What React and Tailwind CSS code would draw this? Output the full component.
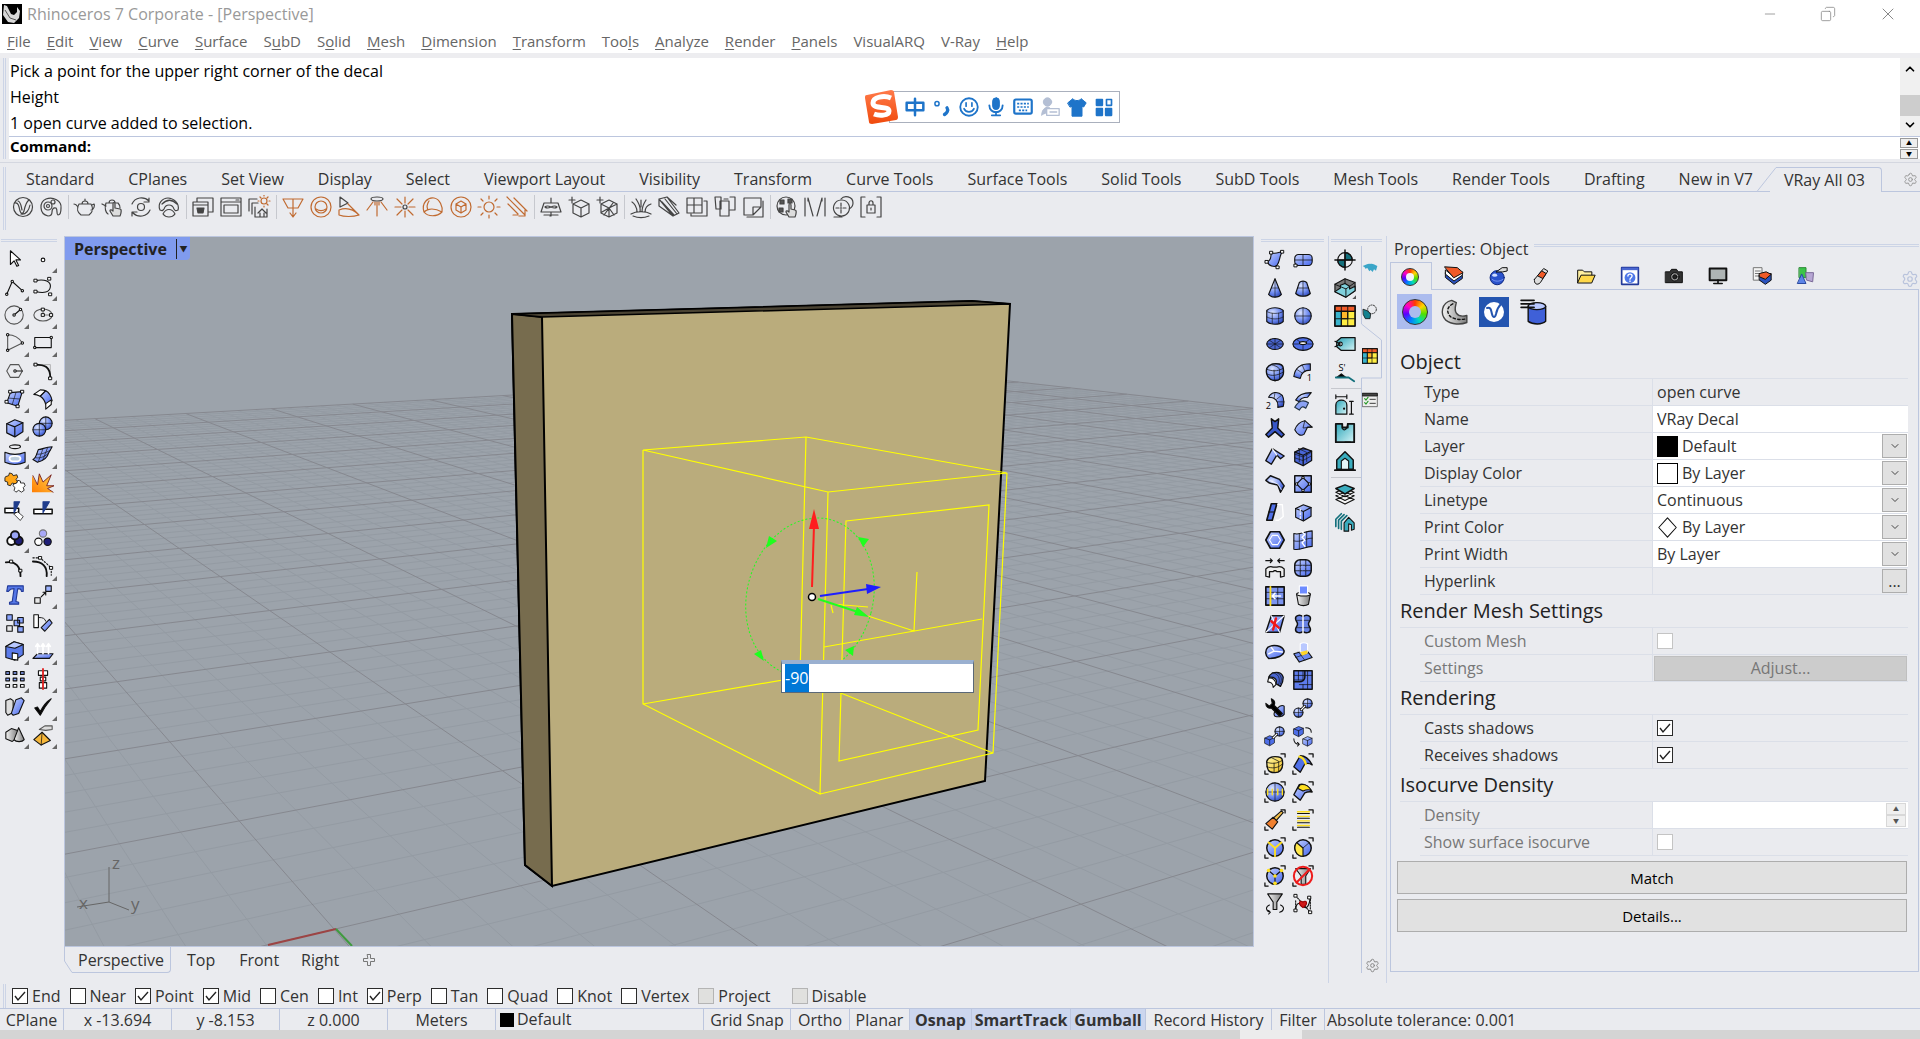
import React from 'react';
import { Settings, Minus, X, Copy, ChevronUp, ChevronDown } from 'lucide-react';

const MENUS = [
  ['File', 0], ['Edit', 0], ['View', 0], ['Curve', 0], ['Surface', 0], ['SubD', 1], ['Solid', 1],
  ['Mesh', 0], ['Dimension', 0], ['Transform', 0], ['Tools', 3], ['Analyze', 0], ['Render', 0],
  ['Panels', 0], ['VisualARQ', -1], ['V-Ray', -1], ['Help', 0],
];

const TABS = [
  'Standard', 'CPlanes', 'Set View', 'Display', 'Select', 'Viewport Layout', 'Visibility',
  'Transform', 'Curve Tools', 'Surface Tools', 'Solid Tools', 'SubD Tools', 'Mesh Tools',
  'Render Tools', 'Drafting', 'New in V7',
];

const Svg = ({ children, size = 'size-6', stroke = '#111' }) => (
  <svg viewBox="0 0 24 24" className={`${size} shrink-0`} fill="none" stroke={stroke} strokeWidth="1.2" strokeLinejoin="round" strokeLinecap="round" aria-hidden="true">
    {children}
  </svg>
);

const Pt = ({ x, y }) => <rect x={x - 1.5} y={y - 1.5} width="3" height="3" fill="#fff" stroke="#000" strokeWidth="1" />;

// shared gradients, referenced by every icon
const Gradients = () => (
  <svg width="0" height="0" className="absolute" aria-hidden="true">
    <defs>
      <linearGradient id="blue" x1="0" y1="0" x2="1" y2="1">
        <stop offset="0" stopColor="#c6d3ff" />
        <stop offset="1" stopColor="#4466ee" />
      </linearGradient>
      <radialGradient id="ball" cx="0.35" cy="0.3" r="0.8">
        <stop offset="0" stopColor="#dbe4ff" />
        <stop offset="0.6" stopColor="#6d8af0" />
        <stop offset="1" stopColor="#2a44b4" />
      </radialGradient>
      <linearGradient id="teal" x1="0" y1="0" x2="1" y2="1">
        <stop offset="0" stopColor="#2ba5b8" />
        <stop offset="1" stopColor="#d6f4f7" />
      </linearGradient>
      <linearGradient id="gray" x1="0" y1="0" x2="1" y2="0">
        <stop offset="0" stopColor="#f4f4f4" />
        <stop offset="1" stopColor="#7d7d7d" />
      </linearGradient>
      <linearGradient id="gold" x1="0" y1="0" x2="1" y2="1">
        <stop offset="0" stopColor="#fff6a8" />
        <stop offset="1" stopColor="#f0c020" />
      </linearGradient>
      <linearGradient id="fire" x1="0" y1="1" x2="1" y2="0">
        <stop offset="0" stopColor="#ff7a00" />
        <stop offset="1" stopColor="#ffd24a" />
      </linearGradient>
      <linearGradient id="sogou" x1="0" y1="0" x2="0" y2="1">
        <stop offset="0" stopColor="#ff7a4a" />
        <stop offset="1" stopColor="#f04a0c" />
      </linearGradient>
    </defs>
  </svg>
);

const ORANGE = '#c06a30';
const GRAY = '#444';

const VRAY_GROUPS = [
  [
    [GRAY, <><circle cx="12" cy="12" r="9.5" /><path d="M4 8c3-1 4 3 5 8 1 3 3 3 4 0 1-5 2-9 5-11M7 6c3 1 3 5 4 9M10 19c5 1 8-4 9-9" /></>],
    [GRAY, <><path d="M9 21C0 19 0 7 7 4c7-3 16 2 15 9 0 5-1 7-3 7-2-1 0-5-2-7-3-1-4 2-4 4s-1 4-4 4z" /><circle cx="9" cy="11" r="4" /><circle cx="14" cy="7" r="2" /><circle cx="9" cy="11" r="1.5" /></>],
  ],
  [
    [GRAY, <><path d="M6 9h12c3 5 1 9-2 11H8C5 18 3 14 6 9zM9 9c0-4 6-4 6 0M12 6V4M5 12C3 9 2 9 1 9M18 15c3 0 4-5 3-6l-2 1" /></>],
    [GRAY, <><path d="M5 8h12c2 2 2 3 2 5M8 8c0-4 6-4 6 0M7 19C5 18 3 13 5 8M5 11L1 9" /><path d="M12 21l-3-5c0-2 2-1 3 0V9c0-2 2-2 2 0v4l5 1c2 0 1 5 0 7z" fill="#ddd" /></>],
    [GRAY, <><circle cx="12" cy="12" r="3.5" /><path d="M3 9c3-7 12-8 17-3M20 3v4h-5M21 15c-3 7-12 8-17 3M3 21v-4h5" /></>],
    [GRAY, <><path d="M3 15c-3-7 3-12 8-12s12 5 10 12c-2 1-3 1-4-1-1-3-3-4-5-4s-4 1-5 4c-1 2-2 2-4 1z" /><path d="M5 9c5-5 10-5 15 0M6 19c3-6 9-6 12 0-3 4-9 4-12 0z" /></>],
  ],
  [
    [GRAY, <><path d="M2 7h15v14H2zM6 7V3h16v14h-5M2 10h15" /><path d="M6 13h7l-1 5H7z" fill="#444" /></>],
    [GRAY, <><path d="M2 3h20v18H2zM2 7h20M5 10h14v8H5zM17 5h3" /></>],
    [GRAY, <><path d="M2 4h8M2 4v12M5 8h6M5 8v11M8 12v10h12v-8M11 18l4-4 4 4M13 18v4M17 18v4" /><g stroke={ORANGE}><circle cx="17" cy="6" r="3" /><path d="M17 0v1M17 11v1M11 6h1M22 6h1M13 2l1 1M21 2l-1 1M21 10l-1-1" /></g></>],
  ],
  [
    [ORANGE, <path d="M2 4h20l-5 9H7zM12 4v17M9 18l3 4 3-4" />],
    [ORANGE, <><circle cx="12" cy="12" r="10" /><circle cx="12" cy="12" r="6" /><path d="M7 14c3 2 7 2 10 0" /></>],
    [ORANGE, <><path d="M3 2l8 6-8 4z" stroke="#444" /><path d="M2 15v5c5 2 14 2 20 0L11 9M2 15c8-3 15 0 20 5" /></>],
    [ORANGE, <><ellipse cx="12" cy="4" rx="6" ry="2" stroke="#444" /><path d="M12 7v14M8 7l-6 8M16 7l6 8M10 7v3M14 7v3" /></>],
    [ORANGE, <><circle cx="12" cy="12" r="2" stroke="#444" /><path d="M12 2v6M12 16v6M2 12h6M16 12h6M4 4l5 5M20 4l-5 5M4 20l5-5M20 20l-5-5" /></>],
    [ORANGE, <path d="M3 17C0 8 7 2 13 3c6 1 9 9 8 14-5 5-14 5-18 0zM3 17c4-4 11-4 18 0M8 6C6 9 6 13 7 15" />],
    [ORANGE, <><circle cx="12" cy="12" r="10" /><path d="M12 6l5 3v6l-5 3-5-3V9zM7 9l5 3 5-3M12 12v6" /></>],
    [ORANGE, <><circle cx="12" cy="12" r="5" /><path d="M12 1v3M12 20v3M1 12h3M20 12h3M4 4l2 2M20 4l-2 2M4 20l2-2M20 20l-2-2" /></>],
    [ORANGE, <path d="M2 2l18 18M14 21h6v-6M3 9l10 10M9 3l13 13M8 20h5" />],
  ],
  [
    [GRAY, <path d="M5 8h14l3 9H2zM12 3v5M12 17v4M12 21h-1M6 12c2-2 4-1 6 0s4 2 6 0c-2-2-4-1-6 0s-4 2-6 0M5 20h14" />],
    [GRAY, <path d="M5 2v6M2 5h6M14 5l8 4v9l-8 4-8-4V9zM6 9l8 4 8-4M14 13v9" />],
    [GRAY, <path d="M5 2v6M2 5h6M14 5l8 4v9l-8 4-8-4V9zM6 9l8 4 8-4M14 13v9M7 17l7-4 5 7M9 20l9-12" />],
  ],
  [
    [GRAY, <path d="M2 19c5-3 15-3 20 0M4 21c5 2 11 2 16 0M8 17C8 12 5 8 3 7M11 17c1-6-2-10-4-13M13 17c0-6 2-9 4-12M16 17c0-4 3-7 6-8M12 12V5" />],
    [GRAY, <path d="M2 4l8-2 12 16-6 3zM2 4v7l14 10M5 7l12 13M8 4l12 15M10 2l9 8" />],
    [GRAY, <path d="M2 3h15v15H2zM2 10h15M9 3v15M19 6h3v15H6v-2" />],
    [GRAY, <path d="M7 6h9v15H7zM2 2h6v12H3zM17 2h5v13h-5M11 4h4" />],
    [GRAY, <path d="M3 3h17v9l-8 8H3zM12 20v-8h8M6 22h16V6" />],
  ],
  [
    [GRAY, <><circle cx="11" cy="11" r="9" /><path d="M5 5h4v4H5zM13 4h4v4h-4zM4 13h4v4H4z" fill="#555" /><path d="M14 22l-3-5c0-2 2-1 3 0v-7c0-2 2-2 2 0v4l4 1c2 0 1 5 0 7z" fill="#ddd" /></>],
    [GRAY, <path d="M2 3v18M22 3v18M5 3l5 18M19 3l-5 18M5 3v3M19 3v3" />],
    [GRAY, <path d="M10 5a8 8 0 1 0 1 0M10 8v3M10 15v3M5 13h3M12 13h3M10 4c3-4 12-3 12 4 0 3-2 5-4 6M3 22h8M10 12v2" />],
    [GRAY, <path d="M6 2H2v20h4M18 2h4v20h-4M8 10h8v8H8zM10 10V8c0-3 4-3 4 0v2M12 13v2" />],
  ],
];

const cube = (x, y, s, fill = 'url(#blue)') => (
  <g transform={`translate(${x} ${y}) scale(${s})`}>
    <path d="M0 5l8-4 8 3v9l-8 5-8-4z" fill={fill} />
    <path d="M0 5l8 3v9M8 8l8-4" />
  </g>
);

const ball = (cx, cy, r) => (
  <g>
    <circle cx={cx} cy={cy} r={r} fill="url(#ball)" />
    <path d={`M${cx - r} ${cy}h${2 * r}M${cx} ${cy - r}v${2 * r}`} strokeWidth="0.7" />
  </g>
);

// [icon, has flyout]
const LEFT_TOOLS = [
  [<path d="M7 3v15l4-4 3 6 2-1-3-6h5z" fill="#fff" />, 0],
  [<circle cx="12" cy="13" r="2" fill="#fff" />, 1],
  [<><path d="M3 20L9 6l11 10" /><circle cx="3" cy="20" r="1.3" fill="#fff" /><circle cx="9" cy="6" r="1.3" fill="#fff" /><circle cx="20" cy="16" r="1.3" fill="#fff" /></>, 1],
  [<><path d="M4 5c10-2 17 1 16 7s-7 7-16 5" /><Pt x={4} y={5} /><Pt x={19} y={3} /><Pt x={4} y={17} /><Pt x={20} y={20} /></>, 1],
  [<><circle cx="11" cy="12" r="10" stroke="#555" /><path d="M11 12l7-6" /><circle cx="11" cy="12" r="1.3" fill="#fff" /><circle cx="18" cy="6" r="1.3" fill="#fff" /></>, 1],
  [<><ellipse cx="12" cy="12" rx="10" ry="6.5" stroke="#555" /><path d="M12 5v7h9" stroke="#777" /><Pt x={12} y={6} /><Pt x={12} y={12} /><Pt x={21} y={12} /></>, 1],
  [<><path d="M4 3c8 0 13 4 16 9L4 20z" stroke="#555" /><circle cx="4" cy="3" r="1.3" fill="#fff" /><circle cx="20" cy="12" r="1.3" fill="#fff" /><circle cx="4" cy="20" r="1.3" fill="#fff" /></>, 1],
  [<><path d="M3 6h18v11H3z" /><circle cx="3" cy="17" r="1.3" fill="#fff" /><circle cx="21" cy="6" r="1.3" fill="#fff" /></>, 1],
  [<><path d="M7 5h9l4 7-4 7H7l-4-7z" stroke="#555" /><path d="M12 12h8" /><circle cx="12" cy="12" r="1.3" fill="#fff" /></>, 1],
  [<><path d="M3 5h17v15" stroke="#999" strokeWidth="0.8" /><path d="M3 5c11 0 17 2 17 15" strokeWidth="2" /><Pt x={4} y={5} /><Pt x={20} y={20} /></>, 1],
  [<><path d="M7 5l13-1-5 16L3 16z" fill="url(#blue)" /><path d="M5 11l12 1M13 5l-4 13" strokeWidth="0.7" /><Pt x={7} y={4} /><Pt x={20} y={4} /><Pt x={3} y={15} /><Pt x={15} y={20} /></>, 1],
  [<><path d="M2 7l7-5c2 0 4 0 6 1l-6 6c-2-1-4-2-7-2z" fill="#fff" /><path d="M9 9l6-6c4 2 6 6 7 11l-7 4c-1-4-3-7-6-9z" fill="url(#blue)" /><path d="M15 17l6-4 0 5-6 5z" fill="#fff" /></>, 1],
  [cube(3, 3, 1.1), 1],
  [<>{ball(15, 8, 7)}{ball(8, 15, 7)}</>, 1],
  [<><ellipse cx="12" cy="3" rx="6" ry="2" /><path d="M1 9c7 3 15 3 22 0v11c-7 3-15 3-22 0z" fill="url(#blue)" /><ellipse cx="12" cy="16" rx="6" ry="3" fill="#bcd" stroke="#fff" strokeWidth="2" /></>, 1],
  [<><path d="M7 6c5 0 7-3 15-3l-4 7c-1 5-5 8-12 10l-5-3c4-2 4-7 6-11z" fill="url(#blue)" /><path d="M5 11c5 1 10-2 15-4M4 15c6 1 11-2 14-5M12 5L7 19M17 4l-5 13" strokeWidth="0.7" /></>, 1],
  [<><path d="M2 5l3-1 1-3 3 1 1 2 4-1 1 3-2 2 2 3-3 2-3-1-2 3-3-1 0-3-3-1 0-3z" fill="#ffa618" strokeWidth="0.900" /><path d="M11 13l3-1 1-3 3 1 0 2 4 0 1 3-2 2 1 3-3 2-3-2-3 2-2-2 1-3-2-2z" fill="#fff" strokeWidth="0.900" /></>, 0],
  [<><path d="M0 24V4l6 10 2-12 4 9 9-8-5 12 8 0-7 3 6 4H0z" fill="url(#fire)" stroke="none" /><path d="M1 4l5 10 2-12 4 9 9-8-5 12 8 0-7 3 6 4" stroke="#722" strokeWidth="1" /></>, 0],
  [<><path d="M1 9h15v5H1z" fill="#fff" strokeWidth="1.6" /><path d="M11 2h6l-6 12z" fill="#1f3c8c" stroke="#1f3c8c" /><path d="M11 15l4-2 6 5-3 4z" fill="#fff" strokeWidth="0.8" /></>, 0],
  [<><path d="M2 10h20v5H2z" fill="#fff" strokeWidth="1.6" /><path d="M12 2h7l-7 12z" fill="#1f3c8c" stroke="#1f3c8c" /></>, 0],
  [<g strokeWidth="2"><circle cx="8" cy="14" r="4.500" fill="#fff" /><circle cx="16" cy="14" r="4.500" fill="#201f78" /><circle cx="12" cy="8" r="4.500" fill="#9aa5f5" /></g>, 1],
  [<><circle cx="12" cy="6" r="4" fill="#a8a8f8" stroke="#777" /><circle cx="7" cy="15" r="4" fill="#fff" /><circle cx="17" cy="15" r="4" fill="#201f78" /></>, 0],
  [<><path d="M2 7c11-2 16 5 16 15" strokeWidth="2" /><Pt x={8} y={6} /><Pt x={18} y={16} /></>, 0],
  [<><path d="M1 6c10 0 16 5 15 16" strokeWidth="2" /><path d="M1 2h8l12 11v8" strokeDasharray="1.5 2" /><Pt x={9} y={2} /><Pt x={21} y={13} /></>, 1],
  [<path d="M4 2h17v6h-2c0-2-1-3-4-3l-2 14 3 1v2H6v-2l3-1 2-14C7 5 6 6 5 8H3z" fill="#5577e6" stroke="#223a99" />, 0],
  [<><path d="M15 2h6v6h-6z" fill="#9db4ff" /><path d="M3 15h6v6H3z" fill="#e8e8e8" /><path d="M10 14l5-5M12 9h3v3" /></>, 1],
  [<g fill="#8aa5ff"><path d="M3 3h6v6H3zM15 6h6v6h-6zM11 9h6v6h-6zM15 16h6v6h-6z" /><path d="M3 15h6v6H3z" fill="#e8e8e8" /></g>, 0],
  [<><path d="M2 3h5v14H2z" fill="#fff" /><path d="M10 17L19 8l3 4-8 9z" fill="url(#blue)" /><path d="M8 6c4 0 6 1 7 4" strokeWidth="1" /></>, 0],
  [<><path d="M2 7l9-5 10 3v11l-9 6-10-3z" fill="#5b7bea" /><path d="M2 7l10 2 9-4-10-3z" fill="#b8c8ff" /><path d="M9 14l6 1v7l-6-1z" fill="#fff" /></>, 1],
  [<><path d="M1 20l5-5h17l-4 5z" fill="url(#blue)" /><path d="M6 15V5M4 7l2-3 2 3M12 15V5M10 7l2-3 2 3M18 15V5M16 7l2-3 2 3" stroke="#fff" strokeWidth="1.8" /></>, 1],
  [<g fill="#8aa5ff"><path d="M2 4h4v3H2zM10 4h4v3h-4zM18 4h4v3h-4zM2 11h4v3H2zM10 11h4v3h-4zM18 11h4v3h-4z" /><path d="M2 18h4v3H2zM10 18h4v3h-4zM18 18h4v3h-4z" fill="#fff" /></g>, 1],
  [<><path d="M7 3h10v5H7zM9 10h6v4H9zM8 16h8v6H8z" fill="#fff" /><path d="M12 1v22" stroke="#e02020" strokeWidth="2" /></>, 1],
  [<><path d="M2 5l5-2 3 2v13l-6 3-2-3z" fill="#ddd" /><path d="M13 4l6-2 3 3-6 14-6 2-2-2z" fill="url(#blue)" /></>, 1],
  [<path d="M3 13l3-1 3 5C12 11 16 6 21 3 16 9 12 15 9 21z" fill="#000" />, 1],
  [<><path d="M2 9l6-4 7 2v8l-6 4-7-3z" fill="url(#gray)" /><path d="M16 4l6 13c-2 3-9 3-11 0z" fill="url(#gray)" /></>, 1],
  [<><path d="M11 9l9 9-10 5-8-6z" fill="#f5b63a" /><path d="M11 9l-1 14" strokeWidth="0.8" /><path d="M8 6l6-4 8 0v4l-7 1z" fill="#ddd" stroke="#555" /></>, 1],
];

const brackets = <path d="M18 1h5v4M1 19v4h4" strokeWidth="1.4" strokeLinecap="butt" />;

const SUBD_TOOLS = [
  <><path d="M8 4c6 2 8-1 12-1-4 6-2 10-6 15-2 2-9 1-10-4 5-3 3-7 4-10z" fill="url(#blue)" /><Pt x={8} y={4} /><Pt x={20} y={3} /><Pt x={3} y={14} /><Pt x={15} y={20} /></>,
  <><rect x="3" y="6" width="19" height="12" rx="4" fill="url(#blue)" /><path d="M3 12h19M12 6v12" strokeWidth="0.8" /><Pt x={4} y={18} /></>,
  <><path d="M12 2l7 17c-3 4-11 4-14 0z" fill="url(#ball)" /><path d="M12 2v20M8 12h8" strokeWidth="0.6" /></>,
  <><path d="M8 6c2-2 6-2 8 0l4 12c-4 4-12 4-16 0z" fill="url(#ball)" /><path d="M12 5v16M6 12h12" strokeWidth="0.7" /></>,
  <><path d="M3 6c4-4 14-4 18 0v12c-4 4-14 4-18 0z" fill="url(#ball)" /><path d="M3 7c4 3 14 3 18 0M3 13c5 3 13 3 18 0M9 9v11M16 9v11" strokeWidth="0.7" /></>,
  ball(12, 12, 9),
  <><ellipse cx="12" cy="12" rx="9" ry="6" fill="#4a66d0" /><path d="M3 12h18M6 8l12 8M18 8L6 16M12 6v12" strokeWidth="0.7" /></>,
  <><ellipse cx="12" cy="12" rx="11" ry="7" fill="#4f6fe8" /><ellipse cx="12" cy="11" rx="4" ry="1.6" fill="#fff" /><path d="M1 12h6M17 12h6M12 13v6M5 7l4 3M19 7l-4 3" strokeWidth="0.7" /></>,
  <><path d="M3 8c2-4 6-5 10-5 5 0 8 2 8 5 1 6 0 9-3 11-3 3-9 3-12 0-3-2-4-7-3-11z" fill="url(#ball)" strokeWidth="1.500" /><path d="M3 9c5 2 11 3 18-1M11 10c0 4 0 8 1 12M8 4c3 1 8 2 9 5v11M3 14c5 3 12 2 18-2" strokeWidth="0.8" /></>,
  <><path d="M2 17C3 8 9 3 20 3v7c-6 0-10 3-11 9z" fill="url(#ball)" /><path d="M5 9l6 4M11 4l3 7" strokeWidth="0.7" /><text x="16" y="22" fontSize="10" fill="#000" stroke="none">1</text></>,
  <><path d="M5 9c3-6 10-7 15-2 2 4 2 8 1 12l-6 1c1-7-3-11-10-11z" fill="url(#ball)" /><path d="M12 4l-1 6M19 7l-5 4M22 14l-7 0" strokeWidth="0.7" /><text x="2" y="22" fontSize="10" fill="#000" stroke="none">2</text></>,
  <><path d="M4 12c3-6 8-8 17-8l-4 5c-5 0-8 1-9 5z" fill="url(#ball)" /><path d="M3 20c4-7 9-9 15-5l-3 6c-4-3-5-1-7 2z" fill="#8ba2f4" stroke="#234" /></>,
  <path d="M8 2l4 3 4-3-1 10 7 7-3 3-7-6-7 6-3-3 7-7z" fill="#3857c8" strokeWidth="1.6" />,
  <><path d="M3 14c2-6 6-9 11-10l8 7-5 0-4 8c-3 2-7 1-10-5z" fill="url(#blue)" /><path d="M14 4l-2 8 10-1" strokeWidth="0.8" /></>,
  <><path d="M2 17L9 4l13 8-4 3-4-4-6 10z" fill="url(#blue)" strokeWidth="1.500" /><path d="M9 4l5 7" stroke="#fff" /></>,
  <>{cube(3, 2, 1.15, '#4966d8')}<path d="M7 4l9 4v10M3 14l9 3 9-5M3 10l9 3 9-5M8 6v12M16 5l-9-1" strokeWidth="0.7" /></>,
  <><path d="M2 8l5-5 10 4 5 7-4 7-3-8-9-2z" fill="url(#ball)" strokeWidth="1.6" /><path d="M6 8l9 4 4 6" stroke="#fff" strokeWidth="0.8" /></>,
  <><path d="M3 3h18v18H3z" fill="url(#blue)" strokeWidth="1.6" /><path d="M12 5l7 7-7 7-7-7z" /><circle cx="12" cy="5" r="1.3" fill="#fff" /><circle cx="19" cy="12" r="1.3" fill="#fff" /><circle cx="12" cy="19" r="1.3" fill="#fff" /><circle cx="5" cy="12" r="1.3" fill="#fff" /></>,
  <><path d="M8 3h6L9 21H3z" fill="#4f6fe8" strokeWidth="1.8" /><path d="M5 12h6" /><path d="M15 4h5l1 13-5 4h-3" stroke="#fff" strokeWidth="1.5" /></>,
  <>{cube(4, 3, 1.05)}<path d="M9 9v10" stroke="#fff" strokeDasharray="2 2" /></>,
  <><path d="M7 3h10l5 9-5 9H7l-5-9z" fill="url(#blue)" strokeWidth="1.8" /><path d="M9 7h6l3 5-3 5H9l-3-5z" stroke="#fff" /></>,
  <><path d="M2 5c8 2 12-3 20-3v17c-8 0-12 5-20 3z" fill="url(#blue)" /><path d="M2 13c8 2 12-3 20-3M8 5v17M16 3v16" strokeWidth="0.8" /><path d="M11 3l3 3-3 3 3 3-3 3 3 4" stroke="#fff" strokeWidth="1.5" /></>,
  <><path d="M2 4h7M7 2l2 2-2 2M22 4h-7M17 2l-2 2 2 2" strokeWidth="1.4" /><path d="M2 13c3-3 5-3 8-2h4c3-1 5-1 8 2v8l-4 1v-6h-4l-1-1h-2l-1 1H6v6l-4-1z" fill="#eee" strokeWidth="1.4" /></>,
  <><rect x="3" y="3" width="18" height="18" rx="6" fill="url(#blue)" strokeWidth="1.6" /><path d="M3 9h18M3 15h18M9 3v18M15 3v18" strokeDasharray="2 1" strokeWidth="0.9" /></>,
  <><path d="M2 2h20v20H2z" fill="#7b94f0" strokeWidth="1.8" /><path d="M2 8h20M2 15h20M15 2v20" strokeWidth="0.8" /><path d="M7 2v20" stroke="#ffe020" strokeWidth="2" /><path d="M18 12H9M12 9l-3 3 3 3" stroke="#fff" strokeWidth="1.8" /></>,
  <><path d="M5 10h15l-2 11c-3 2-8 2-11 0z" fill="url(#gray)" /><ellipse cx="12.500" cy="10" rx="7.500" ry="2" fill="#eee" /><path d="M8 1h9v9H8z" fill="#6d8bff" stroke="#fff" /></>,
  <><path d="M8 3h14l-5 18H2z" fill="url(#blue)" strokeWidth="1.6" /><path d="M8 3l9 18M22 3L2 21" stroke="#fff" /><path d="M13 6l-3 12M8 9l8 7" stroke="#f01818" strokeWidth="2.600" /></>,
  <><path d="M12 4c4-3 9-1 8 3-1 3-2 3-2 5s1 2 2 5c1 4-4 6-8 3-4 3-9 1-8-3 1-3 2-3 2-5S5 10 4 7c-1-4 4-6 8-3z" fill="#6883e4" strokeWidth="1.6" /><path d="M5 8h14M5 16h14" strokeWidth="0.7" /><path d="M12 3v18" stroke="#fff" strokeWidth="1.6" /></>,
  <><path d="M4 7c6-4 16-2 18 4 0 5-8 8-17 8-4-3-4-9-1-12z" fill="url(#blue)" strokeWidth="1.6" /><path d="M5 14l6-3 9 1M11 11L8 7" stroke="#fff" strokeWidth="1.5" /></>,
  <><path d="M2 14l14-4 6 8-14 5z" fill="#6d8af0" /><path d="M7 12l7 9M4 18l14-5" strokeWidth="0.7" /><path d="M9 3c3-2 6-1 8 0v9H9z" fill="#b9c8ff" stroke="#fff" /><path d="M9 12l8-2v4l-6 2z" fill="#ffd52a" stroke="none" /></>,
  <><path d="M5 9c3-7 14-7 16 0 0 4-1 7-3 10l-5-3c2-5-2-8-8-7z" fill="#4a66d0" strokeWidth="1.4" /><path d="M9 4c7 1 9 6 7 13M14 4c5 2 6 7 4 12" strokeWidth="0.7" /><path d="M5 10c4-1 8 2 8 7l-3 3c0-4-3-6-6-6z" fill="#fff" /></>,
  <><path d="M2 2h20v20H2z" fill="#5e7cec" strokeWidth="1.6" /><path d="M2 7h20M2 12h11M8 17h14M7 2v10M12 2v10M17 2v20M12 17v5" strokeWidth="0.8" /><path d="M14 2v7c0 3-3 5-6 5H2" strokeWidth="1.6" /></>,
  <><path d="M12 21c-4-4 6-14 10-11v9c-2 3-7 3-10 2z" fill="url(#blue)" /><path d="M8 2c4 2 4 5 3 7l9 9-3 3-9-9c-3 1-6-1-6-5l4 3 3-3z" fill="#000" /></>,
  <>{ball(7, 17, 5)}{ball(17, 7, 5)}<path d="M10 14l4-4" strokeWidth="3" /><path d="M10 14l4-4" stroke="#fff" strokeWidth="1.400" /></>,
  <>{cube(1, 11, 0.65, '#4f6fe8')}{ball(17, 7, 5)}<path d="M10 14l4-4" strokeWidth="3" /><path d="M10 14l4-4" stroke="#fff" strokeWidth="1.400" /></>,
  <>{cube(2, 1, 0.65, '#4f6fe8')}{cube(12, 12, 0.62)}<path d="M15 3c4 0 6 2 6 5M2 15c0 4 2 6 6 6M6 19l2 2-2 2" strokeWidth="1.1" /></>,
  <><path d="M3 9c1-3 4-5 9-5 5 0 8 1 8 4 1 6 0 9-2 11-3 3-9 3-12 1-3-2-3-7-3-11z" fill="url(#gold)" strokeWidth="1.500" /><path d="M3 10c5 2 11 2 17-2M11 11v10M8 5l8 4v11M3 15c6 2 12 2 17-3" strokeWidth="0.8" />{brackets}</>,
  <><path d="M2 15L9 3c6 0 10 4 13 10-3-2-6-2-8-1l-5 9z" fill="#4f6fe8" strokeWidth="1.5" /><path d="M8 4c4 1 6 4 7 8" stroke="#ffe020" strokeWidth="2.400" />{brackets}</>,
  <>{ball(12, 12, 10)}<path d="M4 9v6M9 9v6M15 9v6M20 9v6" stroke="#ffe020" strokeWidth="1.5" />{brackets}</>,
  <><path d="M2 15L8 4c6-2 10 2 14 8-4-1-6 0-8 1l-5 8z" fill="url(#blue)" strokeWidth="1.5" /><path d="M9 4c5-1 9 1 12 6-4-1-7 0-9 1L6 8z" fill="#ffe020" />{brackets}</>,
  <><path d="M19 2l2 2-8 9-3-3z" fill="#f5c04a" /><path d="M10 9l5 5-6 8-7-6z" fill="#f08030" />{brackets}</>,
  <><path d="M6 3h13M6 8h13M6 13h13M6 18h13" stroke="#ffe020" strokeWidth="1.5" /><path d="M6 5h13M6 10h13M6 15h13M6 20h13" strokeWidth="1.100" />{brackets}</>,
  <><circle cx="12" cy="12" r="9" fill="url(#blue)" strokeWidth="1.6" /><path d="M5 6l7 6 7-6M12 12v9" stroke="#ffe020" strokeWidth="2" />{brackets}</>,
  <><circle cx="12" cy="12" r="9" fill="url(#blue)" strokeWidth="1.6" /><path d="M5 6l7 6v9c-8 0-11-9-7-15z" fill="#ffe84a" /><path d="M12 12l7-6" strokeWidth="0.8" />{brackets}</>,
  <><circle cx="12" cy="12" r="9" fill="url(#blue)" strokeWidth="1.6" /><path d="M5 6l7 6 7-6M12 12v9" /><g fill="#ffe020" stroke="none"><circle cx="5" cy="6" r="2" /><circle cx="19" cy="6" r="2" /><circle cx="12" cy="20" r="2" /><circle cx="12" cy="12" r="2" /></g>{brackets}</>,
  <><path d="M4 4h16l-5 8v9h-5v-9z" fill="url(#gray)" /><circle cx="12" cy="12" r="10" stroke="#ee1c1c" strokeWidth="2.200" /><path d="M19 5L5 19" stroke="#ee1c1c" strokeWidth="2.200" />{brackets}</>,
  <><path d="M4 1h16l-6 9v8h-4v-8z" fill="url(#gray)" /><path d="M6 13c-5 2-4 7 1 8M5 19l2 2-2 2M18 13c5 2 4 7-1 8" strokeWidth="1.100" /></>,
  <><path d="M4 19V8M20 4v15M4 3l16 18" strokeDasharray="1.500 1.500" /><path d="M4 19c0-8 4-10 8-5s7 0 8-10" /><path d="M12 16c-7-5-3-9 0-6 3-3 7 1 0 6z" fill="#d01818" stroke="#900" /><Pt x={4} y={19} /><Pt x={19} y={5} /><Pt x={4} y={3} /><Pt x={20} y={21} /></>,
];

const scheduleTable = (
  <>
    <path d="M1 1h22v22H1z" fill="#ffee44" />
    <path d="M1 1h22v6H1z" fill="#f05a28" />
    <path d="M8 7h7v8H8z" fill="#ffb62a" />
    <path d="M1 7h7v16H1z" fill="#39b3cc" />
    <path d="M1 1h22v22H1z" strokeWidth="1.400" />
    <path d="M1 7h22M8 1v22M15 1v22M1 15h22" strokeWidth="1" />
  </>
);

const ARQ_GROUPS = [
  [
    <><path d="M12 4a8 8 0 0 1 8 8h-8zM12 20a8 8 0 0 1-8-8h8z" fill="#14707c" /><circle cx="12" cy="12" r="8" /><path d="M12 1v22M1 12h22" strokeWidth="1.600" /></>,
    <><path d="M1 8l11-6 11 4v9l-10 7-12-6z" fill="#777" /><path d="M1 16l6-4V9l5-2 5 3v3l6-3v5l-10 7z" fill="#7fd0dc" /><path d="M1 8l12 5 10-7M13 13v9M12 2v5" strokeWidth="1" /><path d="M20 24l4-4v4z" fill="#555" stroke="none" /></>,
    scheduleTable,
    <><path d="M8 5h15v14H8l-5-4V9z" fill="url(#teal)" strokeWidth="1.400" /><circle cx="7" cy="12" r="2" fill="#fff" /><path d="M1 9l6 3-6 3" /></>,
    <><text x="5" y="11" fontSize="10" fill="#000" stroke="none">S'</text><path d="M3 18l5-4 5 4z" fill="#000" /><path d="M2 18h14l6 4" stroke="#14707c" strokeWidth="2" /></>,
  ],
  [
    <><path d="M2 22V12c0-7 12-7 12 0v10z" fill="url(#teal)" strokeWidth="1.400" /><circle cx="11" cy="16" r="0.600" /><path d="M2 3h12M2 1v4M14 1v4M19 8v14M17 8h4M17 22h4" strokeWidth="1.300" /></>,
    <><path d="M2 2h7v4l6 0V2h7v20H2z" fill="url(#teal)" strokeWidth="2" /><path d="M9 7c2 3 5 2 6-5M12 22h6" /></>,
    <><path d="M3 21V11l9-9 9 9v10z" fill="#3aacbe" strokeWidth="1.600" /><path d="M8 21v-9l4-3 4 3v9z" fill="#e4f6f8" /><path d="M1 22h22" strokeWidth="2" /></>,
  ],
  [
    <><path d="M2 18l10-4 10 4-10 5zM2 14l10-4 10 4-10 5zM2 10l10-4 10 4-10 5z" fill="#f4f4f4" /><path d="M2 6l10-4 10 4-10 6z" fill="#3aacbe" strokeWidth="1.600" /></>,
    <><path d="M2 17V9l6-6M5 19v-9l6-6M8 20v-9l6-6" stroke="#14707c" strokeWidth="1.800" /><path d="M11 22v-9l5-6 6 6v7l-3 1v-6l-3-1v8z" fill="#3aacbe" /></>,
  ],
];

const ARQ_TABS = [
  <path d="M1 9c5-1 8-4 11-3 4-1 7 1 11 3l-2 7-3-2-2 4-3-3-2 2-3-5-3 1-1-2z" fill="#3aa5c8" stroke="none" />,
  <><path d="M2 8l6 2 5 5-1 7H5l-3-6z" fill="#14828f" /><circle cx="15" cy="8" r="6.500" strokeDasharray="2 2" /></>,
  scheduleTable,
  <><path d="M1 2h22v20H1z" fill="#eee" stroke="#555" /><path d="M1 2h22v4H1z" fill="#444" /><path d="M4 10l2 2 3-4M4 16l2 2 3-4" stroke="#2a9a2a" strokeWidth="1.800" /><path d="M12 11h8M12 17h8" /></>,
];

const PANEL_TABS = [
  ['Layers', <><path d="M2 8l10 8 10-6v5l-10 7-10-8z" fill="#2a52be" /><path d="M2 5l10 8 10-6v4l-10 7-10-8z" fill="#fff" /><path d="M1 1l15 1 7 6-11 6z" fill="#f05a28" /></>],
  ['Materials', <><circle cx="11" cy="14" r="8.500" fill="#2a52cc" stroke="#112a80" /><ellipse cx="8" cy="11" rx="3" ry="2" fill="#cfdcff" stroke="none" /><path d="M5 16c3 3 9 3 13 0" stroke="#9db4ff" strokeWidth="0.800" /><path d="M10 7l7-5h6v4l-5 1z" fill="#ddd" /></>],
  ['Textures', <><path d="M3 16l11-13 5 3-9 14c-4 4-8 1-7-4z" fill="#ddd" /><path d="M12 6l5 3-4 6-6-3z" fill="#f05a28" /></>],
  ['Libraries', <><path d="M2 20V5h6l2 2h9v4" fill="#fff0a0" /><path d="M2 20l4-9h17l-4 9z" fill="#ffd84a" /></>],
  ['Help', <><path d="M2 2h20v20H2z" fill="#fff" stroke="#233a9a" strokeWidth="2" /><path d="M2 2h20v3H2z" fill="#4a66d0" stroke="none" /><circle cx="12" cy="14" r="6.500" fill="#4f78e8" stroke="none" /><path d="M9.500 12c0-3 5-3 5 0 0 2-2.500 2-2.500 4M12 18v.5" stroke="#fff" strokeWidth="1.600" /></>],
  ['Views', <><path d="M2 7h5l2-3h6l2 3h5v13H2z" fill="#333" /><circle cx="13" cy="13" r="5" fill="#999" /><circle cx="13" cy="13" r="2.500" fill="#222" /></>],
  ['Display', <><path d="M2 3h20v14H2z" fill="#aeb4b4" strokeWidth="2.400" /><path d="M7 21h10M12 17v4" strokeWidth="2" /></>],
  ['Notes', <><path d="M2 2h10v15H2z" fill="#f4f4f4" stroke="#777" /><path d="M4 6h6M4 9h6M4 12h6" stroke="#777" /><path d="M9 11l14-2v8l-7 5-7-5z" fill="#2a52be" /><path d="M9 9l8-2 6 3-7 6-7-3z" fill="#f05a28" /></>],
  ['Ground', <><path d="M4 2h8v12H4z" fill="#3cc44a" stroke="#2a8a34" /><path d="M12 8h9l-1 11-7-2z" fill="#b7a6d4" stroke="#7a6a98" /><path d="M7 10l5 11H2z" fill="#5c84e8" stroke="#2a4aa0" /></>],
];

const Gear = ({ className }) => <Settings className={className} strokeWidth={1.6} aria-hidden="true" />;

const Check = ({ label, checked, disabled, hideLabel, id, light }) => {
  const box = light
    ? 'border-[#c4c4c4] bg-white'
    : disabled
      ? 'border-[#b4b4b4] bg-[#e0e0de]'
      : 'border-[#2b2b2b] bg-white';
  return (
    <span className="flex items-center gap-1">
      <span className="relative flex">
        <input id={id} type="checkbox" defaultChecked={checked} disabled={disabled} className={`peer size-4 appearance-none border ${box}`} />
        <svg viewBox="0 0 16 16" className="pointer-events-none absolute inset-0 hidden size-4 peer-checked:block" fill="none" stroke="#222" strokeWidth="1.4">
          <path d="M3 8l3 4 7-8" />
        </svg>
      </span>
      {!hideLabel && <label htmlFor={id}>{label}</label>}
    </span>
  );
};

const TitleBar = () => (
  <header className="flex h-7 items-center bg-white pl-[2px] text-[#999]">
    <svg viewBox="0 0 20 20" className="size-5" aria-hidden="true">
      <path d="M0 0h20v20H0z" fill="#000" />
      <path d="M2 1l3 1 4 8 3 1 3-3V3l3 4-1 7-5 5-6-1-5-7z" fill="#d8d8d8" />
      <path d="M3 6l5 8 6 2" stroke="#555" fill="none" />
    </svg>
    <h1 className="ml-[5px] flex-1">Rhinoceros 7 Corporate - [Perspective]</h1>
    <div className="flex items-center gap-[42px] pr-[22px] text-[#888]">
      <button aria-label="Minimize"><Minus className="size-4" strokeWidth={1.2} /></button>
      <button aria-label="Restore"><Copy className="size-4 -scale-x-100" strokeWidth={1.2} /></button>
      <button aria-label="Close"><X className="size-5" strokeWidth={1.2} /></button>
    </div>
  </header>
);

const MenuBar = () => (
  <nav className="flex h-[25px] items-center gap-4 bg-white pl-[7px] text-[15px] text-[#666]">
    {MENUS.map(([name, key]) => (
      <button key={name}>
        {key < 0 ? name : <>{name.slice(0, key)}<u className="underline-offset-2">{name[key]}</u>{name.slice(key + 1)}</>}
      </button>
    ))}
  </nav>
);

const ImeBar = () => (
  <div className="absolute top-[31px] left-[45%] flex -translate-x-px items-center">
    <svg viewBox="0 0 36 36" className="z-10 -mr-[10px] size-9" aria-hidden="true">
      <path d="M4 6l24-5c2 0 3 1 3 2l4 25c0 2-1 3-2 3L9 35c-2 0-3-1-3-2L2 9c0-2 0-3 2-3z" fill="url(#sogou)" />
      <path d="M28 9c-7-3-18-1-18 5 0 7 16 2 16 8 0 5-10 5-15 3" fill="none" stroke="#fff" strokeWidth="5" />
    </svg>
    <div className="flex h-8 items-center gap-[7px] border border-[#aab0bd] bg-white pr-[5px] pl-[15px] text-[#1e74c9]">
      <Svg size="size-5" stroke="#1e74c9"><path d="M2 7h20v9H2zM12 2v20" strokeWidth="3" /></Svg>
      <Svg size="size-5" stroke="#1e74c9"><circle cx="6" cy="8" r="2.500" strokeWidth="1.800" /><path d="M18 13c2 3 0 6-3 8" strokeWidth="4" /></Svg>
      <Svg size="size-5" stroke="#1e74c9"><circle cx="12" cy="12" r="10.500" strokeWidth="2.200" /><path d="M8.500 7v4M15.500 7v4M6 14c2 5 10 5 12 0" strokeWidth="2" /></Svg>
      <Svg size="size-5" stroke="#1e74c9"><rect x="8" y="1" width="8" height="14" rx="4" fill="#1e74c9" /><path d="M4 10c0 11 16 11 16 0M12 18v4M7 22h10" strokeWidth="2.200" /></Svg>
      <Svg size="size-5" stroke="#1e74c9"><rect x="1.500" y="3" width="21" height="17" rx="2" strokeWidth="2.600" /><path d="M5 8h14M5 12h14M7 16h10" strokeWidth="2" strokeDasharray="2.500 1.500" strokeLinecap="butt" /></Svg>
      <Svg size="size-5" stroke="#b4bfd4"><circle cx="9" cy="6" r="5" fill="#b4bfd4" /><path d="M2 22c0-12 12-12 12-5" fill="#b4bfd4" /><path d="M8 14h15v8H8zM12 18h8" strokeWidth="1.600" fill="#fff" /></Svg>
      <Svg size="size-5" stroke="#1e74c9"><path d="M1 7l6-5c2 3 8 3 10 0l6 5-3 5-2-1v12H6V11l-2 1z" fill="#1e74c9" /></Svg>
      <Svg size="size-5" stroke="#1e74c9"><path d="M3 3h7v7H3zM3 14h7v8H3zM14 14h7v8h-7z" fill="#1e74c9" strokeWidth="2" /><path d="M15 3h6v7h-6z" strokeWidth="2" /></Svg>
    </div>
  </div>
);

const CommandArea = () => (
  <section className="relative border-t-[5px] border-[#ededf0] pl-[3px] text-black">
    <div className="flex border-l-3 border-double border-[#ccd4e6] pl-[3px]">
      <div className="flex-1 bg-white">
        <div className="flex border-b border-[#bcc6de]">
          <div className="flex-1 pl-[1px] leading-[26px]">
            <p>Pick a point for the upper right corner of the decal</p>
            <p>Height</p>
            <p>1 open curve added to selection.</p>
          </div>
          <div className="flex w-5 flex-col items-center justify-between bg-[#f0f0f0] py-1">
            <ChevronUp className="size-[14px]" strokeWidth={3} />
            <span className="mt-4 h-[21px] w-full bg-[#cdcdcd]" />
            <ChevronDown className="size-[14px]" strokeWidth={3} />
          </div>
        </div>
        <div className="flex items-start pr-[2px]">
          <label htmlFor="command" className="pl-[1px] text-[15px] leading-[18px] font-bold">Command:</label>
          <input id="command" className="ml-1 h-5 flex-1 outline-none" />
          <div className="mt-px flex w-[18px] flex-col gap-px text-[6px] leading-[8px]">
            <button aria-label="Previous command" className="border border-[#999] bg-[#eee]">▲</button>
            <button aria-label="Next command" className="border border-[#999] bg-[#eee]">▼</button>
          </div>
        </div>
      </div>
    </div>
    <ImeBar />
  </section>
);

const ToolTabs = () => (
  <section className="mt-[3px] border-t border-[#d4d7e0] pt-[4px] pl-[3px]">
    <div className="flex flex-col border-l-3 border-double border-[#ccd4e6] pb-2 pl-[3px]">
      <div className="flex h-[25px] items-stretch">
        <div className="flex border-b border-[#bcc6de]">
          {TABS.map((t) => (
            <button key={t} className="px-[17px] whitespace-nowrap">{t}</button>
          ))}
        </div>
        <svg viewBox="0 0 20 25" className="-ml-[14px] h-[25px] w-5 shrink-0" fill="#eaebef" stroke="#bcc6de" aria-hidden="true">
          <path d="M0 24.500h1L20 .5" />
        </svg>
        <button className="rounded-tr border-t border-r border-[#bcc6de] pr-4 pl-[8px] whitespace-nowrap">VRay All 03</button>
        <div className="flex flex-1 items-center justify-end border-b border-[#bcc6de] pr-[2px]">
          <Gear className="size-[15px] text-[#999]" />
        </div>
      </div>
      <div className="flex h-[30px] items-center">
        {VRAY_GROUPS.map((group, g) => (
          <div key={g} className="flex items-center">
            {g > 0 && <span className="mr-[2px] ml-[3px] h-6 w-px bg-[#c6c8ce]" />}
            {group.map(([color, icon], i) => (
              <button key={i} aria-label={`V-Ray tool ${g}-${i}`} className="flex size-7 items-center justify-center">
                <Svg size="size-6" stroke={color}>{icon}</Svg>
              </button>
            ))}
          </div>
        ))}
      </div>
    </div>
  </section>
);

const Grip = () => <div className="h-[3px] border-y border-[#ccd4e6]" />;

const MainTools = () => (
  <aside className="w-16 shrink-0 pt-[3px] pr-[7px] pl-px">
    <Grip />
    <div className="mt-[3px] grid grid-cols-2">
      {LEFT_TOOLS.map(([icon, flyout], i) => (
        <button key={i} aria-label={`Tool ${i + 1}`} className="relative flex size-7 items-center justify-center">
          <Svg size="size-[22px]">{icon}</Svg>
          {flyout === 1 && <span className="absolute right-0 bottom-0 border-b-[5px] border-l-[5px] border-b-[#666] border-l-transparent" />}
        </button>
      ))}
    </div>
  </aside>
);

// Perspective of the construction plane: both line families meet on the horizon (y = 1).
const project = (u, v) => {
  const k = 0.877 + 0.577 * u;
  const depth = 3567 / (4.283 + 0.9596 * v + k);
  return [-337 + depth * k, 1 + depth];
};

const gridLines = (() => {
  const lines = { minor: '', major: '' };
  const add = (major, a, b) => {
    const [x1, y1] = project(...a);
    const [x2, y2] = project(...b);
    lines[major ? 'major' : 'minor'] += `M${x1.toFixed(1)} ${y1.toFixed(1)}L${x2.toFixed(1)} ${y2.toFixed(1)}`;
  };
  for (let i = -5; i <= 70; i++) add(i % 5 === 0, [i / 5, -2], [i / 5, 14]);
  for (let j = -10; j <= 70; j++) add(j % 5 === 0, [-1, j / 5], [14, j / 5]);
  return lines;
})();

const Scene = () => (
  <svg className="absolute inset-0 size-full" fill="none" aria-label="Perspective view of a wall with a decal box">
    <path d={gridLines.minor} stroke="#949ba3" strokeWidth="1" />
    <path d={gridLines.major} stroke="#86888f" strokeWidth="1" />
    <path d="M271 692L203 708" stroke="#9c4444" strokeWidth="2" />
    <path d="M271 692L287 709" stroke="#3f9a3f" strokeWidth="2" />
    {/* everything below is plotted in window coordinates */}
    <g transform="translate(-65 -237)">
      <path d="M512 314L972 301L1010 304L985 781L552 886L525 865z" fill="#baac7c" stroke="#000" strokeWidth="2" />
      <path d="M512 314L542 317L552 886L525 865z" fill="#776c4e" stroke="#000" strokeWidth="2" />
      <path d="M512 314L972 301L1010 304L542 317z" fill="#4a4333" stroke="#000" strokeWidth="1.500" />
      <g stroke="#ffff00" strokeWidth="1.200">
        <path d="M643 450L806 437L1007 473L828 492zM643 450V704L820 794L828 492M1007 473L993 753L820 794M806 437L800 677L643 704M800 677L993 753" />
        <path d="M846 521L989 505L978 730L839 761zM824 647L982 619M868 616L914 631L917 572M832 604L868 607M831 605L833 613" />
      </g>
      <ellipse cx="810" cy="597" rx="63" ry="80" transform="rotate(15 810 597)" stroke="#1eff1e" strokeDasharray="2 2" />
      <g fill="#1eff1e">
        <path d="M766 548L769 536L777 541zM858 537L869 539L863 547zM845 650L854 646L853 656zM754 654L761 650L764 661z" />
        <path d="M869 617L857 607L854 615z" />
      </g>
      <path d="M818 599L858 612" stroke="#1eff1e" strokeWidth="2" />
      <path d="M812 587L814 526" stroke="#ff1e1e" strokeWidth="2" />
      <path d="M814 509L809 529H819z" fill="#ff1e1e" />
      <path d="M820 596L868 589" stroke="#1e1eff" strokeWidth="2" />
      <path d="M881 587L866 584L867 594z" fill="#1e1eff" />
      <circle cx="812" cy="597" r="3.500" fill="#fff" stroke="#000" strokeWidth="1.500" />
      <path d="M109 867V902L77 907M109 902L129 910" stroke="#666" />
      <g fill="#666" fontSize="17">
        <text x="112" y="869">z</text>
        <text x="79" y="909">x</text>
        <text x="131" y="910">y</text>
      </g>
    </g>
  </svg>
);

const Viewport = () => (
  <main className="flex min-w-0 flex-1 flex-col">
    <div className="relative flex-1 overflow-hidden border border-[#bcc6de] bg-[#9ca3ab]">
      <Scene />
      <div className="relative flex h-[23px] w-fit items-center rounded-br bg-[#809bee] pl-[9px] font-bold text-[#222]">
        <h2>Perspective</h2>
        <button aria-label="Viewport menu" className="ml-[9px] flex h-5 w-[14px] items-center justify-center border-l border-[#222] text-[8px]">▼</button>
      </div>
      <input aria-label="Rotation angle" defaultValue="-90" className="absolute top-[423px] left-[716px] h-[33px] w-[193px] border border-t-4 border-[#5a6878] border-t-[#9ab0d0] bg-[linear-gradient(to_right,white_3px,#0078d7_3px,#0078d7_27px,white_27px)] px-[3px] text-white" />
    </div>
    <nav className="flex h-9 items-stretch pb-[10px]">
      <svg viewBox="0 0 8 26" className="h-[26px] w-2" fill="none" stroke="#bcc6de" aria-hidden="true"><path d="M.5 0v14L8 25.500" /></svg>
      <button className="rounded-br border-r border-b border-[#bcc6de] pr-[6px] pl-[6px]">Perspective</button>
      <button className="ml-4">Top</button>
      <button className="ml-6">Front</button>
      <button className="ml-[22px]">Right</button>
      <button aria-label="Add view" className="ml-6 flex items-center">
        <Svg size="size-3" stroke="#777"><path d="M9 1h6v8h8v6h-8v8H9v-8H1V9h8z" strokeWidth="2" /></Svg>
      </button>
    </nav>
  </main>
);

const SubDTools = () => (
  <aside className="w-[75px] shrink-0 border-r border-[#ccd4e6] pt-[3px] pr-[4px] pl-[7px]">
    <Grip />
    <div className="mt-1 grid w-14 grid-cols-2">
      {SUBD_TOOLS.map((icon, i) => (
        <button key={i} aria-label={`SubD tool ${i + 1}`} className="flex size-7 items-center justify-center">
          <Svg size="size-[22px]">{icon}</Svg>
        </button>
      ))}
    </div>
  </aside>
);

const ArchTools = () => (
  <aside className="w-[58px] shrink-0 border-r border-[#ccd4e6] pt-[3px] pr-[4px] pl-[2px]">
    <Grip />
    <div className="mt-1 flex">
      <div className="flex w-[30px] flex-col">
        {ARQ_GROUPS.map((group, g) => (
          <div key={g} className="flex flex-col">
            {g > 0 && <span className="my-[2px] h-px bg-[#c6c8ce]" />}
            {group.map((icon, i) => (
              <button key={i} aria-label={`VisualARQ tool ${g}-${i}`} className="flex size-7 items-center justify-center">
                <Svg size="size-[22px]">{icon}</Svg>
              </button>
            ))}
          </div>
        ))}
      </div>
      <div className="relative flex h-[727px] w-[21px] flex-col">
        <svg viewBox="0 0 21 727" className="absolute inset-0 h-[727px] w-[21px]" fill="none" stroke="#bcc6de" aria-hidden="true">
          <path d="M.5 0V78L20.500 94V132H.5V727" />
        </svg>
        <div className="mt-[14px] flex flex-col gap-[27px] pl-px">
          {ARQ_TABS.map((icon, i) => (
            <button key={i} aria-label={`Palette ${i + 1}`} className="relative flex h-[17px]"><Svg size="size-4">{icon}</Svg></button>
          ))}
        </div>
        <Gear className="mt-auto ml-[4px] size-[15px] text-[#888]" />
      </div>
    </div>
  </aside>
);

const Section = ({ title, children }) => (
  <section className="pr-[10px] pl-[9px]">
    <h3 className="border-b border-[#dbdfe8] text-[20px] leading-[32px] text-[#222]">{title}</h3>
    {children}
  </section>
);

const Row = ({ label, id, muted, fill, children }) => (
  <div className="ml-5 flex h-[27px] items-stretch">
    <label htmlFor={id} className={`w-[233px] shrink-0 border-r border-b border-[#dbdfe8] pl-1 leading-[27px] ${muted ? 'text-[#777]' : ''}`}>{label}</label>
    <div className={`flex min-w-0 flex-1 items-center border-b border-[#dbdfe8] pl-[4px] ${fill ? 'bg-white' : ''}`}>{children}</div>
  </div>
);

const SelectRow = ({ label, id, value, swatch }) => (
  <Row label={label} id={id} fill>
    {swatch && <span className="mr-1 flex">{swatch}</span>}
    <div className="relative h-full flex-1">
      <select id={id} className="h-full w-full appearance-none bg-white">
        <option>{value}</option>
      </select>
      <span className="pointer-events-none absolute top-px right-px flex h-6 w-[25px] items-center justify-center border border-[#adadad] bg-[#e1e1e1]">
        <ChevronDown className="size-3" strokeWidth={1.8} />
      </span>
    </div>
  </Row>
);

const Properties = () => (
  <aside className="flex w-[533px] shrink-0 flex-col pr-px pb-[11px] pl-[3px]">
    <div className="flex items-center gap-[6px] pl-[4px]">
      <h2 className="pt-px leading-[25px]">Properties: Object</h2>
      <div className="-mt-2 flex-1"><Grip /></div>
    </div>
    <div className="flex h-[28px] items-stretch">
      <button aria-label="Properties" className="flex w-[42px] items-center justify-center border-t border-r border-l border-[#bcc6de] pr-[3px]">
        <span className="size-[18px] rounded-full border border-[#333] bg-[conic-gradient(#ff3b00,#ffd500,#4fe000,#00d8c0,#0080ff,#5a00ff,#ff00c8,#ff3b00)] p-1">
          <span className="block size-full rounded-full bg-[#f4f4f6]" />
        </span>
      </button>
      <div className="flex flex-1 border-b border-[#bcc6de]">
        {PANEL_TABS.map(([name, icon]) => (
          <button key={name} aria-label={name} className="flex w-11 items-center justify-center"><Svg size="size-5">{icon}</Svg></button>
        ))}
        <Gear className="mt-[8px] ml-auto size-[18px] text-[#b9c3dc]" />
      </div>
    </div>
    <div className="flex flex-1 flex-col border-x border-b border-[#bcc6de] pt-1">
      <div className="mb-[17px] flex h-[35px] items-center gap-1 pl-[6px]">
        <button aria-label="Object" className="flex size-[35px] items-center justify-center bg-[#acbcee]">
          <span className="size-[26px] rounded-full border border-[#333] bg-[conic-gradient(#ff3b00,#ffd500,#4fe000,#00d8c0,#0080ff,#5a00ff,#ff00c8,#ff3b00)] p-[6px]">
            <span className="block size-full rounded-full bg-[#acbcee]" />
          </span>
        </button>
        <button aria-label="Curve piping" className="flex size-9 items-center justify-center">
          <Svg size="size-7"><path d="M10 2C1 4 0 14 5 19c5 4 13 4 18 2v-6c-4 1-7 1-9-2s-1-5 0-9z" fill="url(#gray)" stroke="#444" /><path d="M11 5c-6 3-5 8-2 11 3 2 8 3 13 2" strokeDasharray="2 2" /></Svg>
        </button>
        <button aria-label="V-Ray" className="ml-[3px] flex size-[30px] items-center justify-center bg-[#2455b0]">
          <Svg size="size-6"><circle cx="12" cy="12" r="10" fill="#fff" stroke="none" /><path d="M5 8c4-1 4 2 5 6 1 4 3 4 4 0 1-5 3-8 5-10" stroke="#2455b0" strokeWidth="2" /></Svg>
        </button>
        <button aria-label="Attributes" className="ml-[3px] flex size-9 items-center justify-center">
          <Svg size="size-7"><path d="M7 7c4-3 12-3 15 0v13c-3 3-11 3-15 0z" fill="#3f60d8" /><ellipse cx="14.500" cy="7" rx="7.500" ry="3" fill="#b8c8ff" /><path d="M1 2h11M1 5h11M1 8h11" strokeWidth="1.600" /></Svg>
        </button>
      </div>
      <Section title="Object">
        <Row label="Type"><span>open curve</span></Row>
        <Row label="Name" id="name" fill><input id="name" defaultValue="VRay Decal" className="w-full outline-none" /></Row>
        <SelectRow label="Layer" id="layer" value="Default" swatch={<span className="size-[21px] bg-black" />} />
        <SelectRow label="Display Color" id="display-color" value="By Layer" swatch={<span className="size-[21px] border border-black bg-white" />} />
        <SelectRow label="Linetype" id="linetype" value="Continuous" />
        <SelectRow label="Print Color" id="print-color" value="By Layer" swatch={<Svg size="size-[21px]"><path d="M12 1l10 11-10 11L2 12z" fill="#fff" /></Svg>} />
        <SelectRow label="Print Width" id="print-width" value="By Layer" />
        <Row label="Hyperlink">
          <button aria-label="Browse hyperlink" className="mr-px ml-auto h-6 w-[25px] border border-[#adadad] bg-[#e1e1e1] leading-4">...</button>
        </Row>
      </Section>
      <Section title="Render Mesh Settings">
        <Row label="Custom Mesh" id="custom-mesh" muted><Check id="custom-mesh" disabled hideLabel light /></Row>
        <Row label="Settings" muted>
          <button disabled className="mr-px -ml-[3px] h-[25px] flex-1 border border-[#bfbfbf] bg-[#cccccc] text-[#777]">Adjust...</button>
        </Row>
      </Section>
      <Section title="Rendering">
        <Row label="Casts shadows" id="casts"><Check id="casts" checked hideLabel /></Row>
        <Row label="Receives shadows" id="receives"><Check id="receives" checked hideLabel /></Row>
      </Section>
      <Section title="Isocurve Density">
        <Row label="Density" id="density" muted fill>
          <input id="density" disabled className="min-w-0 flex-1" />
          <div className="mr-[2px] flex w-5 flex-col text-[6px] leading-[10px] text-[#555]">
            <button aria-label="Increase density" className="border border-[#d8d8d8] bg-[#f0f0f0]">▲</button>
            <button aria-label="Decrease density" className="border border-[#d8d8d8] bg-[#f0f0f0]">▼</button>
          </div>
        </Row>
        <Row label="Show surface isocurve" id="show-iso" muted><Check id="show-iso" disabled hideLabel light /></Row>
      </Section>
      <div className="mt-[5px] mr-[11px] ml-[6px] flex flex-col gap-[5px] text-[15px] text-black">
        <button className="h-[33px] border border-[#adadad] bg-[#e1e1e1]">Match</button>
        <button className="h-[33px] border border-[#adadad] bg-[#e1e1e1]">Details...</button>
      </div>
    </div>
  </aside>
);

const SNAPS = [
  ['End', 1], ['Near', 0], ['Point', 1], ['Mid', 1], ['Cen', 0], ['Int', 0], ['Perp', 1],
  ['Tan', 0], ['Quad', 0], ['Knot', 0], ['Vertex', 0],
];

const OsnapBar = () => (
  <section className="flex h-[25px] items-center pl-[3px]">
    <div className="flex h-6 items-center gap-[9px] border-l-3 border-double border-[#ccd4e6] pl-[6px]">
      {SNAPS.map(([name, on]) => (
        <Check key={name} id={`snap-${name}`} label={name} checked={on === 1} />
      ))}
      <Check id="snap-project" label="Project" disabled />
      <span className="ml-3"><Check id="snap-disable" label="Disable" disabled /></span>
    </div>
  </section>
);

const StatusBar = () => (
  <footer className="flex h-[22px] items-stretch divide-x divide-[#bcc6de] border-t border-[#bcc6de] leading-[23px] whitespace-nowrap">
    <button className="w-16 text-center">CPlane</button>
    <span className="w-[108px] text-center">x -13.694</span>
    <span className="w-[108px] text-center">y -8.153</span>
    <span className="w-[108px] text-center">z 0.000</span>
    <button className="w-[108px] text-center">Meters</button>
    <button className="flex w-[208px] items-center gap-[3px] pl-1"><span className="size-[14px] bg-black" />Default</button>
    <button className="w-[87px] text-center">Grid Snap</button>
    <button className="w-[59px] text-center">Ortho</button>
    <button className="w-[60px] text-center">Planar</button>
    <button className="w-[62px] bg-[#ccd6ee] text-center font-bold">Osnap</button>
    <button className="w-[99px] bg-[#ccd6ee] text-center font-bold">SmartTrack</button>
    <button className="w-[75px] bg-[#ccd6ee] text-center font-bold">Gumball</button>
    <button className="w-[126px] text-center">Record History</button>
    <button className="w-[53px] text-center">Filter</button>
    <span className="pl-[2px]">Absolute tolerance: 0.001</span>
  </footer>
);

export default function App() {
  return (
    <div className="flex min-h-screen flex-col overflow-hidden bg-[#eaebef] font-['Open_Sans','Noto_Sans_CJK_SC',sans-serif] text-[16px] leading-5 text-[#333]">
      <Gradients />
      <TitleBar />
      <MenuBar />
      <CommandArea />
      <ToolTabs />
      <div className="mt-[6px] flex flex-1">
        <MainTools />
        <Viewport />
        <SubDTools />
        <ArchTools />
        <Properties />
      </div>
      <OsnapBar />
      <StatusBar />
      <div className="flex h-[9px] bg-[#d4d4d4]">
        <span className="ml-[64.600%] h-full w-[62px] bg-[#ececec]" />
      </div>
    </div>
  );
}
